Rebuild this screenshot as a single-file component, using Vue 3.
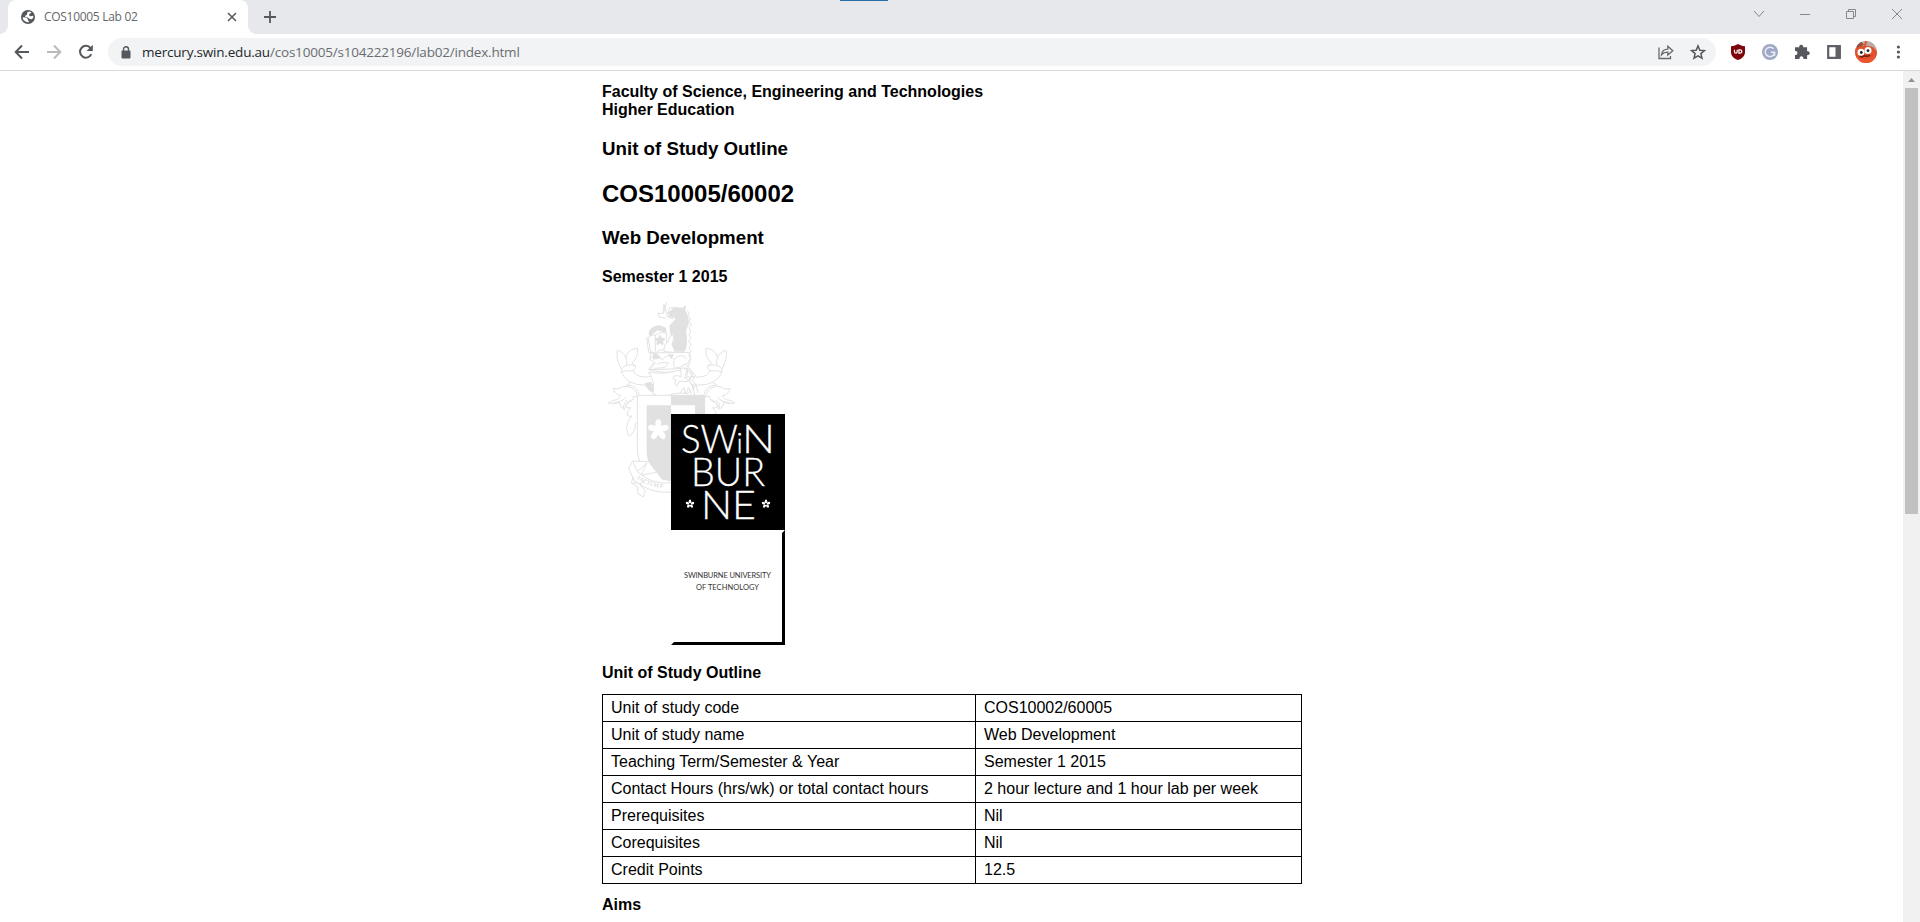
<script setup>
const rows = [
  ['Unit of study code', 'COS10002/60005'],
  ['Unit of study name', 'Web Development'],
  ['Teaching Term/Semester & Year', 'Semester 1 2015'],
  ['Contact Hours (hrs/wk) or total contact hours', '2 hour lecture and 1 hour lab per week'],
  ['Prerequisites', 'Nil'],
  ['Corequisites', 'Nil'],
  ['Credit Points', '12.5'],
]
const petals = [0, 72, 144, 216, 288]
const sides = ['scale(1)', 'translate(430 0) scale(-1 1)']
</script>

<template>
  <div class="browser">
    <header class="tabstrip">
      <div class="accent"></div>
      <div class="tab">
        <svg class="globe" width="14" height="14" viewBox="0 0 14 14">
          <circle cx="7" cy="7" r="7" fill="#54575b" />
          <path d="M1.600 7.200 5 7.400l1.700 1.300.2 1.500 1 .8-.4 1.400-2.600-.6L2.300 9.900z M6.500 2l2.200-.6 1.700 1-1 1-1.200.5v1.500l1.200.8 2.800-.4.200 1.800-1.600 1.600-2.200-.2-1.700-1.400-2.500-.5-.2-1.400 1.700-.9z" fill="#fff" />
        </svg>
        <span class="tab-title">COS10005 Lab 02</span>
        <svg class="tab-close" width="10" height="10" viewBox="0 0 10 10"><path d="M1 1l8 8M9 1l-8 8" stroke="#5a5d61" stroke-width="1.600" /></svg>
      </div>
      <svg class="newtab" width="12" height="12" viewBox="0 0 12 12"><path d="M6 0v12M0 6h12" stroke="#55585c" stroke-width="1.800" /></svg>
      <div class="winbtns">
        <svg viewBox="0 0 12 12"><path d="M1 3l5 5.500L11 3" /></svg>
        <svg viewBox="0 0 12 12"><path d="M1 6.500h10" /></svg>
        <svg viewBox="0 0 12 12"><path d="M1.500 3.500h7v7h-7zM3.500 3.500v-2h7v7h-2" /></svg>
        <svg viewBox="0 0 12 12"><path d="M1 1l10 10M11 1L1 11" /></svg>
      </div>
    </header>

    <div class="toolbar">
      <span class="slot"><svg width="16" height="16" viewBox="0 0 16 16"><path d="M15 8H2.200M8 1.500L1.700 8 8 14.500" fill="none" stroke="#55585c" stroke-width="2" /></svg></span>
      <span class="slot"><svg width="16" height="16" viewBox="0 0 16 16"><path d="M1 8h12.800M8 1.500L14.300 8 8 14.500" fill="none" stroke="#b9babc" stroke-width="2" /></svg></span>
      <span class="slot"><svg width="16" height="16" viewBox="0 0 16 16"><path d="M13.300 10.200A5.900 5.900 0 1 1 12.600 4.100" fill="none" stroke="#55585c" stroke-width="2" /><path d="M14.800.8v6.200H8.600z" fill="#55585c" /></svg></span>
      <div class="omnibox">
        <svg class="lock" width="10" height="13" viewBox="0 0 10 13"><rect x=".5" y="4.500" width="9" height="8" rx="1" fill="#55585c" /><path d="M2.500 5V3.200a2.500 2.500 0 0 1 5 0V5" fill="none" stroke="#55585c" stroke-width="1.400" /></svg>
        <div class="url"><span class="host">mercury.swin.edu.au</span>/cos10005/s104222196/lab02/index.html</div>
        <span class="slot"><svg width="16" height="16" viewBox="0 0 16 16"><path d="M1 3.500V14.500H12.500V12M3.500 10.800C4 7 6.500 5.200 9.800 5.200V2.200L14.800 6.700 9.800 11V8.200C7 8.200 5 9 3.500 10.800z" fill="none" stroke="#66696d" stroke-width="1.300" /></svg></span>
        <span class="slot"><svg width="16" height="16" viewBox="0 0 16 16"><path d="M8 1.900l1.800 4.300 4.700.4-3.600 3 1.100 4.600L8 11.800l-4 2.400 1.100-4.600-3.600-3 4.700-.4z" fill="none" stroke="#55585c" stroke-width="1.500" /></svg></span>
      </div>
      <div class="extensions">
        <span class="slot"><svg width="16" height="16" viewBox="0 0 16 16"><path d="M8 0c2 1.300 4.200 2 7 2.200V8c0 4-3 6.600-7 8-4-1.400-7-4-7-8V2.200C3.800 2 6 1.300 8 0z" fill="#7c0609" /><path d="M4.500 5.700v2.100c0 1.900 2.700 1.900 2.700 0V5.700M8.900 5.900h1.200c2.400 0 2.400 3.300 0 3.300H8.900z" fill="none" stroke="#fff" stroke-width="1.200" /></svg></span>
        <span class="slot"><svg width="16" height="16" viewBox="0 0 16 16"><circle cx="8" cy="8" r="8" fill="#9fa8c5" /><path d="M11.500 4.800A4.700 4.700 0 1 0 12.600 8.300H8.800M12.600 8.300v3.500" fill="none" stroke="#e9edf6" stroke-width="1.500" /></svg></span>
        <span class="slot"><svg width="16" height="16" viewBox="0 0 16 16"><path d="M1 3.300h4.300a2 2 0 1 1 3.800 0h4v4a2 2 0 1 1 0 3.800V15H9.300a2 2 0 1 0-3.700 0H1v-4a2 2 0 1 0 0-3.900z" fill="#55585c" /></svg></span>
        <span class="slot"><svg width="16" height="16" viewBox="0 0 16 16"><path d="M2.200 2.200h11.600v11.600H2.200z" fill="#fff" stroke="#5f6166" stroke-width="2.200" /><path d="M9.500 1.500h5v13h-5z" fill="#5f6166" /></svg></span>
        <span class="slot"><svg width="22" height="22" viewBox="0 0 22 22">
          <defs><clipPath id="face"><circle cx="11" cy="11" r="11" /></clipPath></defs>
          <g clip-path="url(#face)">
            <rect width="22" height="22" fill="#b9aaa3" /><path d="M0 8Q4 4 9 5l1-5h2l-1 5q8-1 11 6v11H0z" fill="#e2512b" />
            <path d="M0 3l6-3 3 4-7 3z" fill="#99513a" /><path d="M1 15q10 7 20 0v8H1z" fill="#ee5630" />
            <circle cx="6" cy="11.300" r="3.500" fill="#fff" /><circle cx="13" cy="9.500" r="3.500" fill="#fff" />
            <circle cx="6.300" cy="11.500" r="1.400" fill="#222" /><circle cx="13" cy="9.700" r="1.400" fill="#222" />
            <path d="M4.500 15.500q3 1 5-.8 3 1.300 5.500-.4" fill="none" stroke="#762114" stroke-width="1.700" />
          </g></svg></span>
        <span class="slot"><svg width="16" height="16" viewBox="0 0 16 16" fill="#55585c"><circle cx="8.400" cy="3" r="1.600" /><circle cx="8.400" cy="8" r="1.600" /><circle cx="8.400" cy="13" r="1.600" /></svg></span>
      </div>
    </div>

    <div class="viewport">
      <main class="page">
        <p class="faculty">Faculty of Science, Engineering and Technologies<br />Higher Education</p>
        <h3>Unit of Study Outline</h3>
        <h2>COS10005/60002</h2>
        <h3>Web Development</h3>
        <h4>Semester 1 2015</h4>
        <svg class="logo" width="190" height="350" viewBox="602 298 190 350">
          <g class="crest" transform="translate(600 295) scale(.33333)">
            <!-- side mantling, mirrored left and right -->
            <g v-for="side in sides" :key="side" :transform="side">
              <path class="fill" d="M112 300q-6-20-28-26-16-2-30 8l-14-2q4 18 22 22-6 14-22 14l-15 8q14 6 34-2-2 12 14 22 2-12 12-22 14-2 16-18l16 2z" />
              <path d="M150 280q-18-22-48-20-14 2-22 10 30 0 38 28M100 314q-18 2-24 20 8 8 16 4-12 12-10 24 8 4 14 0-14 16-16 34 0 18 8 28 20-14 18-40M40 324q24-2 38-18M70 340q-2-12 12-26" />
              <path class="fill" d="M64 222q-18-34-12-56 18 4 26 22 4-26 34-28 4 26-16 44l12 12q-10 8-6 16 14 20 56 12l6 24q-64 10-90-20-10-12-10-26z" />
              <path d="M64 222q14-18 44-10M78 188q6 10 0 24M62 232q8-6 38-4" />
            </g>
            <!-- helmet and parchment -->
            <path class="fill" d="M152 174l-2 20 16 8-16 24 40 6 76-4 16 24-10-28-14-14 14-16-4-22z" />
            <path d="M152 192q16-26 36 4M188 194q16-24 34 0M222 194q20-24 38-2M160 204l-14 20 74-2q24-4 38-16M172 206q16-6 34-2l-12 14-32 2M222 196q-4 16 4 24l24 0M256 218q22 8 32 26" />
            <path class="solid" d="M134 264l20-4 10 34q-24-6-30-30zM158 178l14-2 10 14-22 4zM204 178h18l-8 14z" />
            <path class="fill" d="M146 232q30 4 54 2l62-14q-4 22 8 42l12 14-18 20q-40-8-74 14l-32-14q10-34-12-64z" />
            <path class="fill" d="M218 250q6-14 26-4l-2-26q10-6 18 6l-6 24 12-6q8 10-8 16l-20-2-8 16q-10-8-2-18z" />
            <path d="M256 250q22 10 28 50M270 250q20 14 24 44M240 294l12-16 6 18 8-18 8 18" />
            <!-- book and supporter -->
            <path class="solid" d="M146 112q4-16 30-22l22 8 2 16-28-8-24 20z" />
            <path class="fill" d="M144 128q14-12 22-8 20-12 34-4v48q-20-4-34 10l-14-4z" />
            <path d="M140 126l6 46 22 4M166 120v50" />
            <g transform="translate(180 136)"><ellipse v-for="a in petals" :key="a" class="solid" cy="-8" rx="5" ry="8" :transform="`rotate(${a})`" /></g>
            <path class="solid" d="M206 52l18-16 24 2 10-8-2 16q12 18 10 42l-8 20q8 40-4 62h-42l-12-8 12-34-4-36 20-22-22-4z" />
            <path class="fill" d="M192 170q0-26 12-28 4-20 14-24 8 12-2 30l10 24z" />
            <path d="M198 70l-20-4-4-12 14 2 4-28 8 28 6-4 2-14 14 0M206 52l-6 12 20 8M190 56l10-34M262 46l6 10-4 6 8 10-5 7 7 11-7 8 6 12-6 8 6 12-7 8 7 12-6 8 6 12-7 10 7 10-7 8 4 10-8 6" />
            <!-- shield -->
            <path class="fill" d="M112 301h202v164q-8 92-101 126-93-34-101-126z" />
            <path class="solid" d="M140 331h73v242q-66-28-73-98zM213 301h102v70h-30v-40h-72z" />
            <g transform="translate(175 405)"><ellipse v-for="a in petals" :key="a" class="petal" cy="-18" rx="9" ry="14" :transform="`rotate(${a})`" /><circle class="petal" r="8" /></g>
            <!-- motto ribbon -->
            <path class="fill" d="M98 498l48 2 40 52 28 6v34q-66 4-112-36l-16-36z" />
            <path d="M98 498l14 32 28-26M112 530q44 40 100 34M140 504l-16 36 44-8M100 544l-6 20 18 10 2 22 16 10 6-20-18-18 12-8M96 566q14-8 30 6" />
            <path id="motto" class="curve" d="M106 548q44 32 107 34" />
            <text class="motto"><textPath href="#motto">·FACTUM P</textPath></text>
          </g>
          <path d="M671 414h114v116H671z" fill="#000" />
          <g class="wordmark">
            <text y="453"><tspan x="681" textLength="57" lengthAdjust="spacingAndGlyphs">SW</tspan><tspan class="small" x="736.500">i</tspan><tspan x="742" textLength="33" lengthAdjust="spacingAndGlyphs">N</tspan></text>
            <text x="691" y="486" textLength="74" lengthAdjust="spacingAndGlyphs">BUR</text>
            <text x="701" y="519" textLength="55" lengthAdjust="spacingAndGlyphs">NE</text>
          </g>
          <g v-for="x in [690, 766]" :key="x" :transform="`translate(${x} 504)`" fill="#fff">
            <ellipse v-for="a in petals" :key="a" cy="-2.600" rx="1.300" ry="1.800" :transform="`rotate(${a})`" />
          </g>
          <path d="M785 530v115H671l3-3h108V533z" fill="#000" />
          <g class="caption">
            <text x="684" y="578" textLength="87">SWINBURNE UNIVERSITY</text>
            <text x="696" y="590" textLength="63">OF TECHNOLOGY</text>
          </g>
        </svg>
        <h4 class="outline">Unit of Study Outline</h4>
        <table>
          <tbody>
            <tr v-for="row in rows" :key="row[0]"><td>{{ row[0] }}</td><td>{{ row[1] }}</td></tr>
          </tbody>
        </table>
        <h4 class="aims">Aims</h4>
      </main>
      <div class="scrollbar">
        <svg width="17" height="17" viewBox="0 0 17 17"><path d="M5 11h7L8.500 7z" fill="#929292" /></svg>
        <div class="thumb"></div>
      </div>
    </div>
  </div>
</template>

<style>
body { overflow: hidden; background: #fff; }
</style>

<style scoped>
.browser { width: 1920px; height: 922px; display: flex; flex-direction: column; overflow: hidden; background: #fff; font-family: "Open Sans", sans-serif; }
.tabstrip { position: relative; height: 34px; flex: none; display: flex; background: #e7e8ec; }
.accent { position: absolute; left: 840px; top: 0; width: 48px; height: 1px; background: #2a6ba8; }
.tab { position: relative; box-sizing: border-box; width: 240px; height: 34px; margin-left: 8px; padding: 0 11px 0 13px; display: flex; align-items: center; background: #fff; border-radius: 8px 8px 0 0; }
.tab::before, .tab::after { content: ""; position: absolute; bottom: 0; width: 8px; height: 8px; }
.tab::before { left: -8px; background: radial-gradient(circle at 0 0, transparent 7.500px, #fff 8px); }
.tab::after { right: -8px; background: radial-gradient(circle at 100% 0, transparent 7.500px, #fff 8px); }
.globe { flex: none; }
.tab-title { margin-left: 9px; padding-bottom: 1px; font-size: 12px; letter-spacing: -0.300px; color: #64676b; white-space: nowrap; }
.tab-close { margin-left: auto; }
.newtab { margin: 11px 0 0 16px; }
.winbtns { display: flex; margin-left: auto; }
.winbtns svg { width: 12px; height: 12px; margin: 8px 17px; fill: none; stroke: #85878b; stroke-width: 1; }
.toolbar { height: 36px; flex: none; display: flex; align-items: center; padding-left: 6px; border-bottom: 1px solid #d8d9da; }
.slot { width: 32px; height: 28px; flex: none; display: flex; align-items: center; justify-content: center; }
.omnibox { width: 1608px; height: 28px; margin-left: 6px; border-radius: 14px; background: #f1f3f4; display: flex; align-items: center; box-sizing: border-box; padding: 0 2px 0 13px; }
.url { flex: 1; margin-left: 11px; font-size: 13.500px; letter-spacing: -0.200px; color: #6a6d71; white-space: nowrap; }
.host { color: #26282b; }
.extensions { display: flex; margin-left: 6px; }
.viewport { flex: 1; min-height: 0; display: flex; justify-content: space-between; }
.page { margin-left: 602px; padding-top: 12px; width: 700px; font-family: "Liberation Sans", Arial, sans-serif; font-size: 16px; color: #000; }
.faculty { margin: 0; line-height: 18px; font-weight: bold; }
h2, h3, h4 { margin: 0; font-weight: bold; }
h2 { font-size: 24px; line-height: 27px; margin: 20px 0; }
h3 { font-size: 18.720px; line-height: 22px; margin-top: 19px; }
h4 { font-size: 16px; line-height: 18px; margin-top: 19px; }
.logo { display: block; margin-top: 12px; }
.outline { margin: 16px 0 12px; }
table { border-collapse: collapse; width: 700px; table-layout: fixed; }
td { box-sizing: border-box; height: 27px; padding: 0 8px; line-height: 18px; border: 1px solid #000; }
td:first-child { width: 373px; }
.aims { margin-top: 12px; }
.scrollbar { width: 17px; background: #f1f1f1; }
.scrollbar svg { display: block; }
.thumb { width: 13px; height: 426px; margin: 0 auto; background: #c1c1c1; }
.crest path { fill: none; stroke: #e2e2e2; stroke-width: 3; stroke-linejoin: round; }
.crest .solid { fill: #e1e1e1; stroke: none; }
.crest .fill, .crest .petal { fill: #fff; }
.crest .curve { stroke: none; }
.motto { font: 17px "Liberation Serif", serif; fill: #cfcfcf; }
.wordmark { font-family: Lato, sans-serif; font-size: 39px; font-weight: 300; fill: #fff; stroke: #fff; stroke-width: .3; }
.small { font-size: 28px; }
.caption { font: 7.500px Lato, sans-serif; fill: #333; }
</style>
